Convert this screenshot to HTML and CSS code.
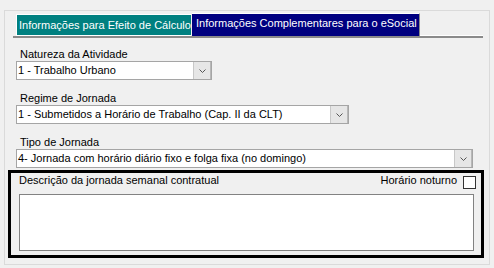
FILE: index.html
```html
<!DOCTYPE html>
<html lang="pt-BR">
<head>
    <meta charset="UTF-8">
    <title>Informações Complementares para o eSocial</title>
    <link rel="stylesheet" href="styles.css">
</head>
<body>
    <div class="panel">
        <div class="tabs">
            <div class="tab tab-calc">Informações para Efeito de Cálculo</div>
            <div class="tab tab-esocial">Informações Complementares para o eSocial</div>
            <div class="tab-fill"></div>
        </div>

        <div class="form">
            <div class="field">
                <div class="label">Natureza da Atividade</div>
                <div class="combo combo-sm">
                    <span class="combo-value">1 - Trabalho Urbano</span>
                    <span class="combo-btn">
                        <svg width="7" height="4" viewBox="0 0 7 4"><path d="M0.5 0.5 L3.5 3.5 L6.5 0.5" fill="none" stroke="#555" stroke-width="1"/></svg>
                    </span>
                </div>
            </div>
            <div class="field">
                <div class="label">Regime de Jornada</div>
                <div class="combo combo-md">
                    <span class="combo-value">1 - Submetidos a Horário de Trabalho (Cap. II da CLT)</span>
                    <span class="combo-btn">
                        <svg width="7" height="4" viewBox="0 0 7 4"><path d="M0.5 0.5 L3.5 3.5 L6.5 0.5" fill="none" stroke="#555" stroke-width="1"/></svg>
                    </span>
                </div>
            </div>
            <div class="field">
                <div class="label">Tipo de Jornada</div>
                <div class="combo combo-lg">
                    <span class="combo-value">4- Jornada com horário diário fixo e folga fixa (no domingo)</span>
                    <span class="combo-btn">
                        <svg width="7" height="4" viewBox="0 0 7 4"><path d="M0.5 0.5 L3.5 3.5 L6.5 0.5" fill="none" stroke="#555" stroke-width="1"/></svg>
                    </span>
                </div>
            </div>
        </div>

        <!-- descrição da jornada -->
        <div class="box">
            <div class="box-head">
                <span class="label">Descrição da jornada semanal contratual</span>
                <span class="night">
                    <span class="night-label">Horário noturno</span>
                    <span class="check"></span>
                </span>
            </div>
            <div class="memo"></div>
        </div>
    </div>
</body>
</html>
```

FILE: styles.css
```css
body {
    margin: 0;
    background-color: #f0f0f0;
    font-family: "Liberation Sans", Arial, sans-serif;
    font-size: 11px;
    color: #000;
}

.panel {
    box-sizing: border-box;
    width: 486px;
    height: 255px;
    margin: 10px 0 0 4px;
    border: 1px solid #dadada;
}

/* abas */
.tabs {
    display: flex;
    align-items: flex-end;
    width: 470px;
    height: 23px;
    margin: 4px 0 0 8px;
    padding-left: 3px;
    box-sizing: border-box;
    border-bottom: 2px solid #8a8a8a;
}

.tab {
    box-sizing: border-box;
    color: #fff;
    white-space: nowrap;
}

.tab-calc {
    width: 175px;
    height: 22px;
    padding: 4px 0 0 2px;
    background-color: #008080;
    border-top: 1px solid #fff;
    border-left: 1px solid #fff;
    border-bottom: 1px solid #fff;
    line-height: 13px;
}

.tab-esocial {
    width: 228px;
    height: 23px;
    margin-left: 1px;
    padding: 3px 0 0 4px;
    background-color: #000080;
    border-top: 1px solid #fff;
    border-right: 1px solid #8a8a8a;
    line-height: 13px;
}

.tab-fill {
    flex: 1;
    height: 1px;
    background-color: #fff;
}

/* campos */
.form {
    padding: 9px 0 0 11px;
}

.field {
    margin-bottom: 11px;
}

.field:last-child {
    margin-bottom: 2px;
}

.label {
    display: block;
    height: 14px;
    line-height: 14px;
    padding-left: 4px;
}

.combo {
    display: flex;
    box-sizing: border-box;
    height: 19px;
    border: 1px solid #a5a5a5;
    background-color: #fff;
}

.combo-sm { width: 196px; }
.combo-md { width: 333px; }
.combo-lg { width: 457px; }

.combo-value {
    flex: 1;
    padding-left: 1px;
    line-height: 17px;
    white-space: nowrap;
    overflow: hidden;
}

.combo-btn {
    display: flex;
    align-items: center;
    justify-content: center;
    width: 16px;
    background-color: #e6e6e6;
    border-left: 1px solid #c8c8c8;
    border-right: 1px solid #b8b8b8;
}

/* quadro */
.box {
    box-sizing: border-box;
    width: 476px;
    height: 88px;
    margin-left: 3px;
    border: 3px solid #000;
}

.box-head {
    display: flex;
    justify-content: space-between;
    height: 21px;
}

.box-head .label {
    padding-left: 8px;
}

.night {
    display: flex;
    align-items: flex-start;
    padding-right: 5px;
}

.night-label {
    line-height: 14px;
    margin-right: 6px;
}

.check {
    box-sizing: border-box;
    width: 13px;
    height: 13px;
    margin-top: 3px;
    border: 1px solid #333;
    background-color: #fff;
}

.memo {
    box-sizing: border-box;
    width: 455px;
    height: 57px;
    margin-left: 8px;
    border: 1px solid #828282;
    background-color: #fff;
}
```
